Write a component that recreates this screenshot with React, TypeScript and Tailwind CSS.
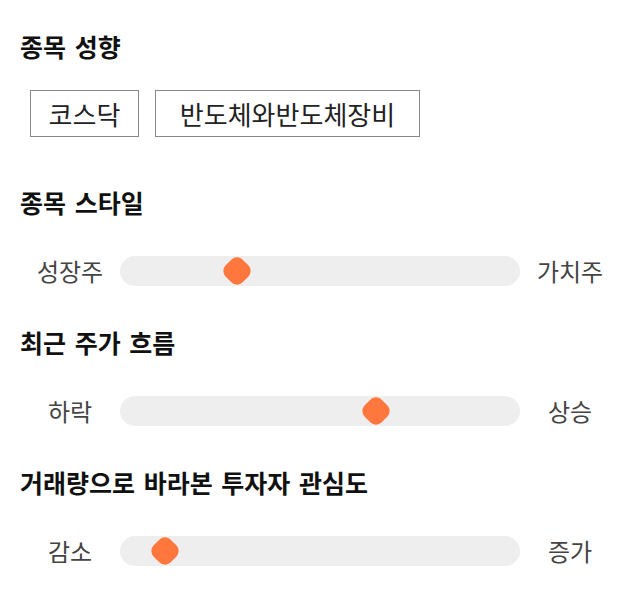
import React from "react";

const font = { fontFamily: '"Noto Sans CJK KR", "Noto Sans", sans-serif' };

function Heading({ children }: { children: React.ReactNode }) {
  return (
    <div className="h-[30px] flex items-center text-[25px] leading-[30px] font-bold text-[#111] [word-spacing:3px] whitespace-nowrap">
      {children}
    </div>
  );
}

function Slider({ left, right, thumbLeft }: { left: string; right: string; thumbLeft: string }) {
  return (
    <div className="h-[30px] flex items-center">
      <div className="w-[100px] text-center text-[24px] leading-[30px] text-[#444]">{left}</div>
      <div className="relative w-[400px] h-[30px] rounded-full bg-[#eeeeee]">
        <div className={`absolute top-[1px] ${thumbLeft} w-[28px] h-[28px] flex items-center justify-center`}>
          <div className="w-[24px] h-[24px] rotate-45 rounded-[8px] bg-[#ff773d]" />
        </div>
      </div>
      <div className="w-[100px] text-center text-[24px] leading-[30px] text-[#444]">{right}</div>
    </div>
  );
}

export default function App() {
  return (
    <div className="w-[640px] h-[606px] bg-white px-5 pt-[31px]" style={font}>
      <Heading>종목 성향</Heading>
      <div className="flex gap-4 ml-[10px] mt-[29px]">
        <div className="w-[109px] h-[47px] flex items-center justify-center border border-[#888] text-[26px] leading-[30px] text-[#222]">코스닥</div>
        <div className="w-[265px] h-[47px] flex items-center justify-center border border-[#888] text-[26px] leading-[30px] text-[#222]">반도체와반도체장비</div>
      </div>
      <div className="mt-[50px]">
        <Heading>종목 스타일</Heading>
      </div>
      <div className="mt-[39px]">
        <Slider left="성장주" right="가치주" thumbLeft="left-[103px]" />
      </div>
      <div className="mt-[41px]">
        <Heading>최근 주가 흐름</Heading>
      </div>
      <div className="mt-[39px]">
        <Slider left="하락" right="상승" thumbLeft="left-[242px]" />
      </div>
      <div className="mt-[41px]">
        <Heading>거래량으로 바라본 투자자 관심도</Heading>
      </div>
      <div className="mt-[39px]">
        <Slider left="감소" right="증가" thumbLeft="left-[31px]" />
      </div>
    </div>
  );
}
